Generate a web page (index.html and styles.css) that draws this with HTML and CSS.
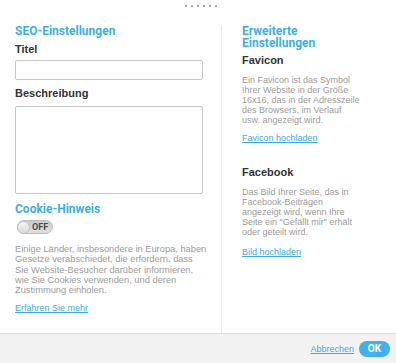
FILE: index.html
```html
<!DOCTYPE html>
<html lang="de">
<head>
<meta charset="utf-8">
<link rel="stylesheet" href="styles.css">
</head>
<body>
<div class="dialog">
  <div class="handle"><i></i><i></i><i></i><i></i><i></i><i></i></div>
  <div class="main">
    <div class="col-left">
      <h2 class="heading">SEO-Einstellungen</h2>
      <div class="label label-titel">Titel</div>
      <div class="input"></div>
      <div class="label label-desc">Beschreibung</div>
      <div class="textarea"></div>
      <h2 class="heading heading-cookie">Cookie-Hinweis</h2>
      <div class="toggle"><span class="knob"></span><span class="toggle-text">OFF</span></div>
      <p class="text text-left">Einige Länder, insbesondere in Europa, haben<br>Gesetze verabschiedet, die erfordern, dass<br>Sie Website-Besucher darüber informieren,<br>wie Sie Cookies verwenden, und deren<br>Zustimmung einholen.</p>
      <a class="link link-more">Erfahren Sie mehr</a>
    </div>
    <div class="col-right">
      <h2 class="heading">Erweiterte Einstellungen</h2>
      <div class="label label-favicon">Favicon</div>
      <p class="text text-right text-fav">Ein Favicon ist das Symbol<br>Ihrer Website in der Größe<br>16x16, das in der Adresszeile<br>des Browsers, im Verlauf<br>usw. angezeigt wird.</p>
      <a class="link link-fav">Favicon hochladen</a>
      <div class="label label-fb">Facebook</div>
      <p class="text text-right text-fb">Das Bild Ihrer Seite, das in<br>Facebook-Beiträgen<br>angezeigt wird, wenn Ihre<br>Seite ein "Gefällt mir" erhält<br>oder geteilt wird.</p>
      <a class="link link-fb">Bild hochladen</a>
    </div>
  </div>
  <div class="footer">
    <a class="link link-cancel">Abbrechen</a>
    <span class="btn-ok">OK</span>
  </div>
</div>
</body>
</html>
```
FILE: styles.css
```css
html, body {
  margin: 0;
  padding: 0;
  background: #ffffff;
}
body {
  font-family: "Liberation Sans", Arial, sans-serif;
  width: 396px;
  height: 363px;
  overflow: hidden;
}
.dialog {
  display: flex;
  flex-direction: column;
  height: 363px;
}
.handle {
  height: 25px;
  box-sizing: border-box;
  padding: 5px 0 0 185px;
  display: flex;
  gap: 4px;
  align-items: flex-start;
}
.handle i {
  display: block;
  width: 2px;
  height: 2px;
  background: #a8a8a8;
}
.main {
  display: flex;
  align-items: stretch;
  height: 308px;
  box-sizing: border-box;
}
.col-left {
  width: 188px;
  margin-left: 15px;
  margin-right: 18px;
  display: flex;
  flex-direction: column;
  align-items: flex-start;
}
.col-right {
  border-left: 1px solid #e6e6e6;
  padding-left: 20px;
  width: 130px;
  display: flex;
  flex-direction: column;
  align-items: flex-start;
}
.heading {
  margin: 0;
  font-family: Roboto, "Liberation Sans", sans-serif;
  font-weight: 700;
  font-size: 12px;
  line-height: 12px;
  color: #3eaee9;
}
.heading-cookie {
  margin-top: 9px;
}
.label {
  font-weight: 700;
  font-size: 11px;
  line-height: 13px;
  color: #333333;
}
.label-titel { margin-top: 6px; }
.label-desc { margin-top: 7px; }
.label-favicon { margin-top: 5px; }
.label-fb { margin-top: 23px; }
.input {
  margin-top: 4px;
  width: 188px;
  height: 20px;
  box-sizing: border-box;
  border: 1px solid #c6c6c6;
  border-radius: 2px;
}
.textarea {
  margin-top: 6px;
  width: 188px;
  height: 88px;
  box-sizing: border-box;
  border: 1px solid #c6c6c6;
  border-radius: 2px;
}
.toggle {
  margin-top: 5px;
  margin-left: 2px;
  width: 36px;
  height: 14px;
  box-sizing: border-box;
  border-radius: 7px;
  background: linear-gradient(#cbcbcb, #e0e0e0);
  border: 1px solid #bdbdbd;
  display: flex;
  align-items: center;
}
.knob {
  width: 13px;
  height: 13px;
  margin-left: -1px;
  border-radius: 50%;
  box-sizing: border-box;
  background: linear-gradient(#f4f4f4, #dadada);
  border: 1px solid #c2c2c2;
}
.toggle-text {
  margin-left: 2px;
  font-family: Roboto, "Liberation Sans", sans-serif;
  font-weight: 700;
  font-size: 9px;
  line-height: 12px;
  color: #4a4a4a;
}
.text {
  margin: 0;
  font-size: 9px;
  color: #9b9b9b;
  white-space: nowrap;
}
.text-left {
  margin-top: 10px;
  line-height: 10.3px;
  font-size: 9.3px;
}
.text-right {
  line-height: 10px;
}
.text-fav { margin-top: 8px; }
.text-fb { margin-top: 8px; }
.link {
  font-size: 9px;
  line-height: 10.3px;
  color: #3ea9e4;
  text-decoration: underline;
  text-underline-offset: 1px;
}
.link-more { margin-top: 8px; }
.link-fav { margin-top: 8px; }
.link-fb { margin-top: 10px; }
.footer {
  border-top: 1px solid #dcdcdc;
  background: #f2f2f2;
  flex: 1;
  display: flex;
  justify-content: flex-end;
  align-items: center;
  padding-right: 6px;
  gap: 5px;
}
.link-cancel {
  margin-top: 2px;
}
.btn-ok {
  width: 31px;
  height: 16px;
  border-radius: 8px;
  background: #42b0ea;
  color: #ffffff;
  font-family: Roboto, "Liberation Sans", sans-serif;
  font-weight: 700;
  font-size: 10px;
  line-height: 16px;
  text-align: center;
  margin-top: 1px;
}
```
